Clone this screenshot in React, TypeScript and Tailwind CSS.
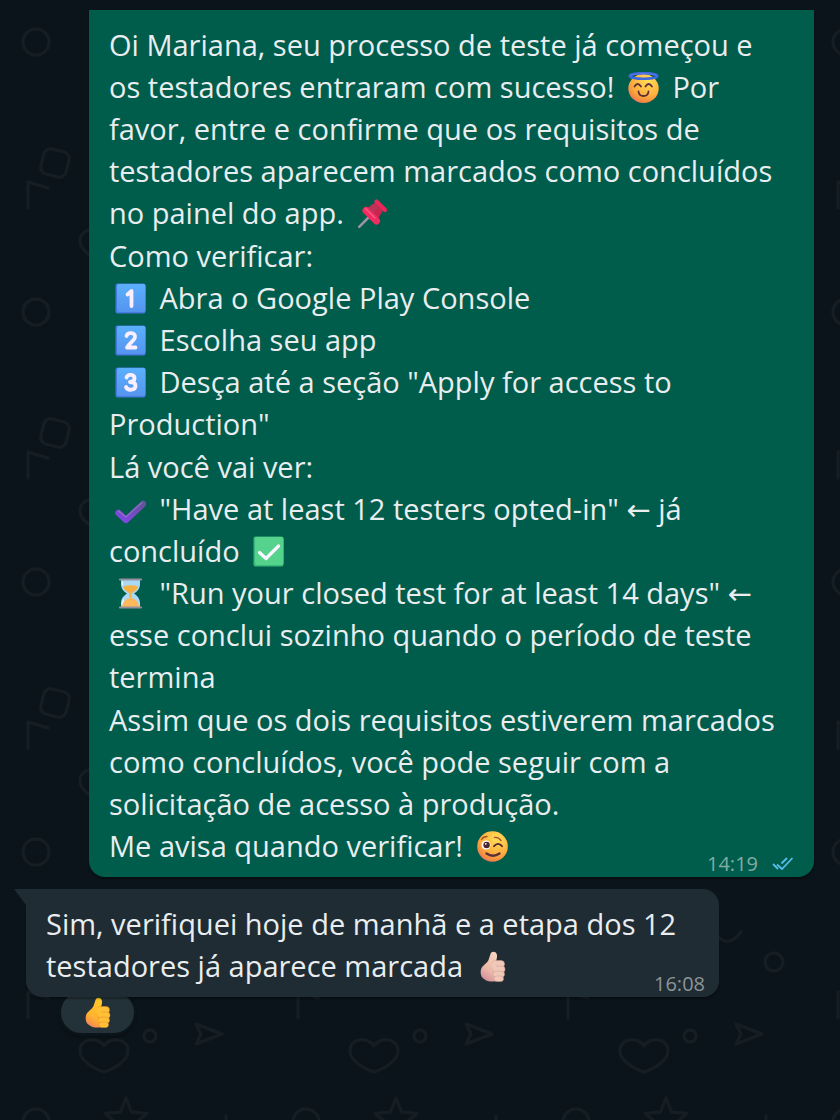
import React from "react";

interface EmojiProps {
  label: string;
  children: React.ReactNode;
}

const Emoji: React.FC<EmojiProps> = ({ label, children }) => (
  <span className="inline-flex h-[42px] items-center align-top mx-[6px]">
    <svg className="size-[31px]" viewBox="0 0 31 31" role="img" aria-label={label}>
      {children}
    </svg>
  </span>
);

const Halo: React.FC = () => (
  <Emoji label="Rosto sorridente com auréola">
    <ellipse cx="15.5" cy="16.5" rx="15.2" ry="14.5" fill="url(#face)" />
    <ellipse cx="15.5" cy="4" rx="13.8" ry="2.8" fill="none" stroke="#3f68dc" strokeWidth="2.6" />
    <path d="M2.5 3.2Q15.5 0 28.5 3.2" fill="none" stroke="#5f7df0" strokeWidth="0.8" />
    <path d="M6.5 14.5q3-5 6.5 0M17.5 14.5q3-5 6.5 0M10.5 19.5c.5 6 9.5 6 10 0" fill="none" stroke="#5b2f38" strokeWidth="1.8" strokeLinecap="round" />
  </Emoji>
);

const Wink: React.FC = () => (
  <Emoji label="Rosto piscando">
    <circle cx="15.5" cy="15.5" r="15.3" fill="url(#face)" />
    <circle cx="9" cy="14" r="4.5" fill="#fff" />
    <circle cx="9.6" cy="14" r="3.2" fill="#4b2630" />
    <circle cx="8.8" cy="12.8" r="0.9" fill="#fff" />
    <path d="M17 15.2q4.2-4.5 8 0" fill="none" stroke="#4b2630" strokeWidth="1.8" strokeLinecap="round" />
    <path d="M4.5 8.5q2-3 5.5-3M17.5 6.5q4-.5 6.5 3" fill="none" stroke="#a5532c" strokeWidth="1.3" strokeLinecap="round" />
    <path d="M9.5 22.5q6.5 4.5 13 0" fill="none" stroke="#5b2f38" strokeWidth="2.4" strokeLinecap="round" />
  </Emoji>
);

const Pin: React.FC = () => (
  <Emoji label="Tachinha">
    <path d="M2.2 28.8 12 19" stroke="#9b93a8" strokeWidth="2.6" strokeLinecap="round" />
    <path d="m10 10 8-5.5 8 8-5.5 9z" fill="#c8254f" />
    <path d="m12 9.5 6-4 4 4-6 6z" fill="#b93458" />
    <path d="M9 12.5 19.5 23" stroke="#f02c60" strokeWidth="7" strokeLinecap="round" />
    <path d="M19.5 3.5 28 12" stroke="#e9285a" strokeWidth="4.2" strokeLinecap="round" />
    <path d="M8.5 10.5 18 20" stroke="#ff5581" strokeWidth="1.5" strokeLinecap="round" />
  </Emoji>
);

const digits: Record<number, string> = {
  1: "M12.5 11.5 16.5 8V23",
  2: "M11.5 11c1-4 9-4 8.5 1 0 3-6 6.5-8 10.5h8.5",
  3: "M11.5 10.5c1.5-4 8.5-3 8 .8 0 3-2.5 3.7-4.5 3.7 3 0 5.5 1 5.5 4 0 4.5-8 5-9.5 1",
};

const Keycap: React.FC<{ n: number }> = ({ n }) => (
  <Emoji label={String(n)}>
    <rect x="0.5" y="0.5" width="30" height="30" rx="2" fill="#477ae0" />
    <rect x="2" y="1" width="28.5" height="28" rx="2" fill="url(#keycap)" />
    <path d={digits[n]} fill="none" stroke="#fbefff" strokeWidth="3.8" strokeLinecap="round" strokeLinejoin="round" />
  </Emoji>
);

const PurpleCheck: React.FC = () => (
  <Emoji label="Marca de verificação">
    <path d="M3.5 19 11 26 28 10" fill="none" stroke="url(#purple)" strokeWidth="6.4" strokeLinecap="round" strokeLinejoin="round" />
    <path d="m3.5 17 7.3 6L27 8.5" fill="none" stroke="#9c85cf" strokeWidth="1.2" strokeLinecap="round" strokeLinejoin="round" opacity="0.6" />
  </Emoji>
);

const GreenCheck: React.FC = () => (
  <Emoji label="Concluído">
    <rect x="0.5" y="0.5" width="30" height="30" rx="2" fill="#3ab879" />
    <rect x="2" y="1" width="28.5" height="28" rx="2" fill="#55d38c" />
    <path d="m6.5 16.5 6.5 6L25.5 10" fill="none" stroke="#fbf5ff" strokeWidth="3.2" strokeLinecap="round" strokeLinejoin="round" />
  </Emoji>
);

const Hourglass: React.FC = () => (
  <Emoji label="Ampulheta">
    <path d="M6 2h19v4c0 5-3 7.5-6 9.5 3 2 6 5 6 9.5v4H6v-4c0-4.500 3-7.500 6-9.500C9 13.500 6 11 6 6z" fill="#a9d9f7" />
    <path d="M8 8.5q7.5-2.5 15 0c-1 4-4.5 5-6.500 7V23h-2v-7.500c-2-2-5.500-3-6.500-7z" fill="#f3b044" />
    <path d="M7 29c0-5 4-9 8.5-9s8.5 4 8.5 9z" fill="#ffb95c" />
    <path d="M7.5 4v3M8.5 22l-1.5 4" stroke="#eafaff" strokeWidth="1.3" strokeLinecap="round" />
    <path d="M5 1.5h21M5 29.5h21" stroke="#94919d" strokeWidth="2.2" strokeLinecap="round" />
  </Emoji>
);

interface ThumbProps {
  palm: string;
  finger: string;
  crease: string;
}

const Thumb: React.FC<ThumbProps> = ({ palm, finger, crease }) => (
  <Emoji label="Polegar para cima">
    <path d="M13.5 3c1-3.5 6-3 6.5 1 .3 3-.8 5.5-1.5 8L21 29c-3 2-9 2-12.5 0C4 27 3 23 4 18.5c1-4 6-6 7.5-9.5z" fill={palm} />
    <rect x="15" y="9.5" width="12.5" height="7" rx="3.5" fill={finger} stroke={crease} strokeWidth="0.5" />
    <rect x="15.5" y="15" width="12.5" height="6.5" rx="3.2" fill={finger} stroke={crease} strokeWidth="0.5" />
    <rect x="16" y="20.2" width="11.5" height="6" rx="3" fill={finger} stroke={crease} strokeWidth="0.5" />
    <rect x="17" y="25" width="9.5" height="5.5" rx="2.7" fill={finger} stroke={crease} strokeWidth="0.5" />
    <path d="M14 12.5c2-1.5 3.5-3 5-2.5v6l-3 3z" fill={finger} />
  </Emoji>
);

const Gradients: React.FC = () => (
  <svg className="absolute size-0" aria-hidden="true">
    <defs>
      <radialGradient id="face" cx="0.65" cy="0.25" r="0.85">
        <stop offset="0" stopColor="#ffdf57" />
        <stop offset="0.6" stopColor="#ffae3e" />
        <stop offset="0.85" stopColor="#f28842" />
        <stop offset="1" stopColor="#ec6480" />
      </radialGradient>
      <linearGradient id="keycap" x1="0" y1="0" x2="0" y2="1">
        <stop offset="0" stopColor="#5bb0fb" />
        <stop offset="1" stopColor="#5594f0" />
      </linearGradient>
      <linearGradient id="purple" x1="1" y1="0" x2="0" y2="1">
        <stop offset="0" stopColor="#63529a" />
        <stop offset="1" stopColor="#8347e8" />
      </linearGradient>
      <linearGradient id="thumbYellow" x1="0.7" y1="0" x2="0.3" y2="1">
        <stop offset="0" stopColor="#ffc928" />
        <stop offset="0.65" stopColor="#ffb22e" />
        <stop offset="1" stopColor="#ee8558" />
      </linearGradient>
      <linearGradient id="thumbLight" x1="0.7" y1="0" x2="0.3" y2="1">
        <stop offset="0" stopColor="#f8d3bd" />
        <stop offset="0.6" stopColor="#ebb9a9" />
        <stop offset="1" stopColor="#d18e9c" />
      </linearGradient>
    </defs>
  </svg>
);

const Wallpaper: React.FC = () => (
  <svg className="absolute inset-0 size-full" aria-hidden="true">
    <defs>
      <pattern id="doodles" width="270" height="270" patternUnits="userSpaceOnUse">
        <g fill="none" stroke="#161e24" strokeWidth="3" strokeLinecap="round" strokeLinejoin="round">
          <circle cx="36" cy="42" r="13" />
          <path d="m126 18 5.5 14 15.5 1.5-12 10 4 15-13-8.5-13 8.5 4-15-12-10 15.5-1.5z" />
          <path d="M226 36v20M216 46h20" />
          <path d="M173 121q14 20 28 1" />
          <circle cx="234" cy="152" r="9" />
          <rect x="42" y="150" width="26" height="26" rx="7" transform="rotate(14 55 163)" />
          <path d="M28 208v-26l20 6" />
          <circle cx="150" cy="226" r="6" />
          <path d="m196 214 26 10-26 10 5-10z" />
          <path d="M104 236c-6-10-24-8-24 5 0 9 12 17 24 21 12-4 24-12 24-21 0-13-18-15-24-5z" />
        </g>
      </pattern>
    </defs>
    <rect width="100%" height="100%" fill="url(#doodles)" />
  </svg>
);

const ReadTicks: React.FC = () => (
  <svg className="h-4 w-[22px]" viewBox="0 0 22 16" fill="none" stroke="#53bdeb" strokeWidth="1.8" role="img" aria-label="Lida">
    <path d="m1 8 5 5M5 8.5l5 4.5L20.5 2M9.5 7.5 15 2" />
  </svg>
);

const Arrow: React.FC = () => <span className="font-['DejaVu_Sans',sans-serif] leading-none">←</span>;

const App: React.FC = () => {
  return (
    <main className="relative isolate min-h-screen overflow-hidden bg-[#0b141a] pt-[10px] font-['Open_Sans','Noto_Sans',sans-serif] text-[29px] leading-[42px] text-[#e9edef]">
      <Wallpaper />
      <Gradients />

      <div className="relative flex flex-col gap-3">
        <article className="relative ml-[89px] mr-[26px] flex flex-col gap-px rounded-b-2xl bg-[#005c4b] px-5 pt-[14px] pb-[10px] whitespace-nowrap shadow-[0_2px_2px_rgba(0,0,0,0.3)]">
          <p>
            Oi Mariana, seu processo de teste já começou e<br />
            os testadores entraram com sucesso! <Halo /> Por<br />
            favor, entre e confirme que os requisitos de<br />
            testadores aparecem marcados como concluídos<br />
            no painel do app. <Pin />
          </p>
          <div>
            <p>Como verificar:</p>
            <p><Keycap n={1} /> Abra o Google Play Console</p>
            <p><Keycap n={2} /> Escolha seu app</p>
            <p>
              <Keycap n={3} /> Desça até a seção "Apply for access to<br />
              Production"
            </p>
          </div>
          <div>
            <p>Lá você vai ver:</p>
            <p>
              <PurpleCheck /> "Have at least 12 testers opted-in" <Arrow /> já<br />
              concluído <GreenCheck />
            </p>
            <p>
              <Hourglass /> "Run your closed test for at least 14 days" <Arrow /><br />
              esse conclui sozinho quando o período de teste<br />
              termina
            </p>
          </div>
          <div>
            <p>
              Assim que os dois requisitos estiverem marcados<br />
              como concluídos, você pode seguir com a<br />
              solicitação de acesso à produção.
            </p>
            <p>Me avisa quando verificar! <Wink /></p>
          </div>
          <div className="absolute right-5 bottom-0 flex items-center gap-[14px] text-[20px] leading-[26px] text-[#7fada4]">
            <time>14:19</time>
            <ReadTicks />
          </div>
        </article>

        <div className="ml-[26px] flex flex-col items-start">
          <article className="relative z-10 w-full max-w-[693px] rounded-2xl rounded-tl-none bg-[#202c33] px-5 pt-[14px] pb-[10px] whitespace-nowrap shadow-[0_2px_2px_rgba(0,0,0,0.3)]">
            <svg className="absolute top-0 -left-3 h-4 w-3" viewBox="0 0 12 16" aria-hidden="true">
              <path d="M0 0h12v16z" fill="#202c33" />
            </svg>
            <p>
              Sim, verifiquei hoje de manhã e a etapa dos 12<br />
              testadores já aparece marcada <Thumb palm="url(#thumbLight)" finger="#f0c8b8" crease="#cf9a96" />
            </p>
            <time className="absolute right-[14px] bottom-0 text-[20px] leading-[26px] text-[#8c9599]">16:08</time>
          </article>
          <button className="-mt-2 ml-8 flex h-[47px] w-[79px] items-center justify-center rounded-full border-[3px] border-[#0b141a] bg-[#233138] shadow-[0_2px_2px_rgba(0,0,0,0.2)]">
            <Thumb palm="url(#thumbYellow)" finger="#ffc035" crease="#e08a35" />
          </button>
        </div>
      </div>
    </main>
  );
};

export default App;
